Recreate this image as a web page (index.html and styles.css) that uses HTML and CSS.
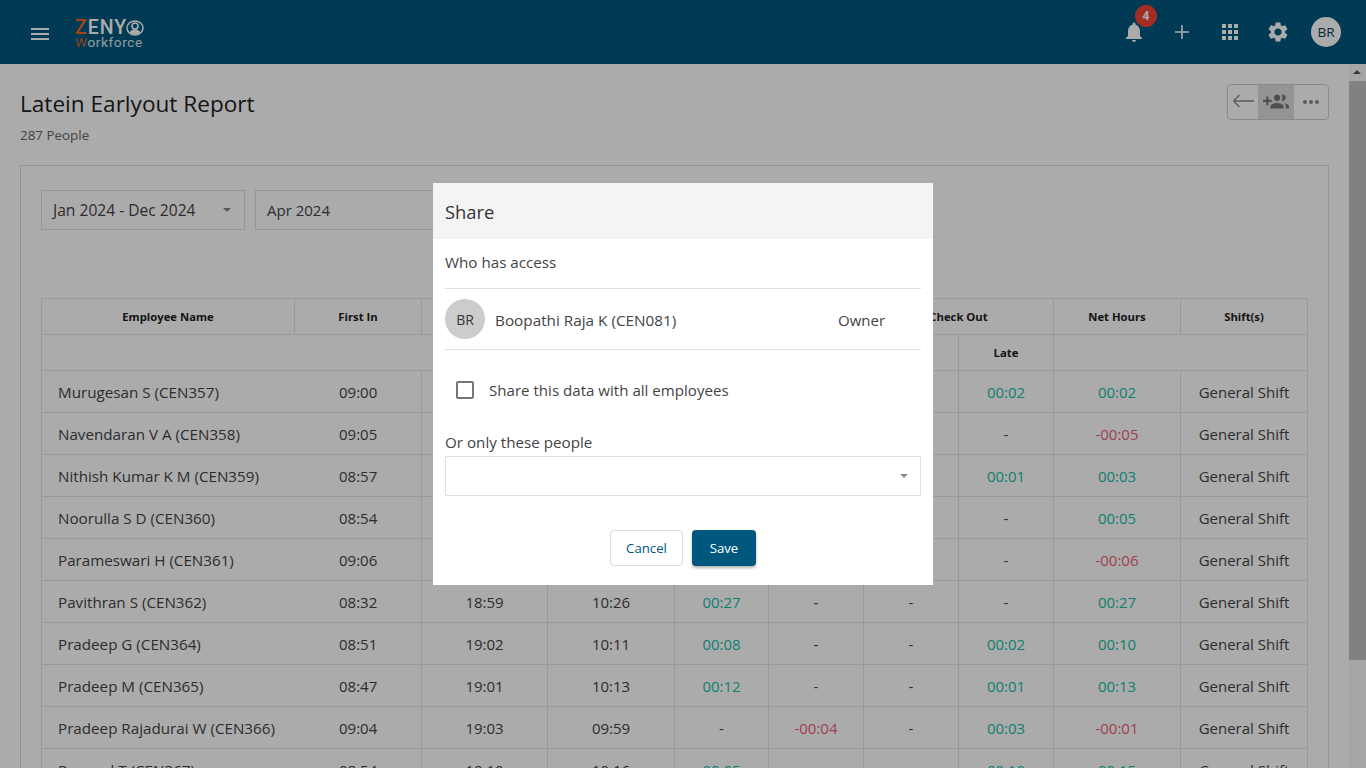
FILE: index.html
```html
<!DOCTYPE html>
<html lang="en">
<head>
<meta charset="utf-8">
<title>Latein Earlyout Report</title>
<link rel="stylesheet" href="styles.css">
</head>
<body>
<div class="app">
  <header class="topbar">
    <svg class="menu-icon" viewBox="0 0 24 24"><path d="M3 18h18v-2H3v2zm0-5h18v-2H3v2zm0-7v2h18V6H3z"/></svg>
    <div class="logo">
      <div class="logo-top"><span class="accent">Z</span>ENY<svg class="logo-mark" viewBox="0 0 18 16"><ellipse cx="9" cy="8" rx="8" ry="7" fill="none" stroke="currentColor" stroke-width="1.5"/><circle cx="9" cy="6" r="3" fill="none" stroke="currentColor" stroke-width="1.6"/><path d="M3.6 12.4c1.2-2.4 3.2-3.2 5.4-3.2s4.2.8 5.4 3.2A7.6 7 0 0 1 3.6 12.4z" fill="currentColor"/></svg></div>
      <div class="logo-sub"><span class="accent">W</span>orkforce</div>
    </div>
    <div class="topbar-actions">
      <div class="action bell">
        <svg viewBox="0 0 24 24"><path d="M12 22c1.1 0 2-.9 2-2h-4c0 1.1.9 2 2 2zm6-6v-5c0-3.07-1.63-5.64-4.5-6.32V4c0-.83-.67-1.5-1.5-1.5s-1.5.67-1.5 1.5v.68C7.64 5.36 6 7.92 6 11v5l-2 2v1h16v-1l-2-2z"/></svg>
        <span class="badge">4</span>
      </div>
      <div class="action"><svg viewBox="0 0 24 24"><path d="M19 12.8h-6.2V19h-1.600v-6.200H5v-1.600h6.200V5h1.600v6.200H19z"/></svg></div>
      <div class="action"><svg viewBox="0 0 24 24"><path d="M4 8h4V4H4v4zm6 12h4v-4h-4v4zm-6 0h4v-4H4v4zm0-6h4v-4H4v4zm6 0h4v-4h-4v4zm6-10v4h4V4h-4zm-6 4h4V4h-4v4zm6 6h4v-4h-4v4zm0 6h4v-4h-4v4z"/></svg></div>
      <div class="action"><svg viewBox="0 0 24 24"><path d="M19.14 12.94c.04-.3.06-.61.06-.94 0-.32-.02-.64-.07-.94l2.03-1.58a.49.49 0 0 0 .12-.61l-1.92-3.32a.488.488 0 0 0-.59-.22l-2.39.96c-.5-.38-1.03-.7-1.62-.94l-.36-2.54a.484.484 0 0 0-.48-.41h-3.84c-.24 0-.43.17-.47.41l-.36 2.54c-.59.24-1.13.57-1.62.94l-2.39-.96c-.22-.08-.47 0-.59.22L2.74 8.87c-.12.21-.08.47.12.61l2.03 1.58c-.05.3-.09.63-.09.94s.02.64.07.94l-2.03 1.58a.49.49 0 0 0-.12.61l1.92 3.32c.12.22.37.29.59.22l2.39-.96c.5.38 1.03.7 1.62.94l.36 2.54c.05.24.24.41.48.41h3.84c.24 0 .44-.17.47-.41l.36-2.54c.59-.24 1.13-.56 1.62-.94l2.39.96c.22.08.47 0 .59-.22l1.92-3.32c.12-.22.07-.47-.12-.61l-2.01-1.58zM12 15.6c-1.98 0-3.6-1.62-3.6-3.6s1.62-3.6 3.6-3.6 3.6 1.62 3.6 3.6-1.62 3.6-3.6 3.6z"/></svg></div>
      <div class="avatar avatar-top">BR</div>
    </div>
  </header>
  <div class="body-row">
    <main class="content">
      <div class="page-head">
        <div>
          <h1 class="page-title">Latein Earlyout Report</h1>
          <p class="page-sub">287 People</p>
        </div>
        <div class="tool-group">
          <div class="tool tool-back"><svg viewBox="0 0 24 24"><path d="M23 11H2.500M2.500 11l6-6M2.500 11l6 6" fill="none" stroke="currentColor" stroke-width="1.3"/></svg></div>
          <div class="tool tool-active"><svg viewBox="0 0 24 24"><path d="M8 10H5V7H3v3H0v2h3v3h2v-3h3v-2zm10 1c1.66 0 2.99-1.34 2.99-3S19.66 5 18 5c-.32 0-.63.05-.91.14.57.81.9 1.79.9 2.86s-.34 2.04-.9 2.86c.28.09.59.14.91.14zm-5 0c1.66 0 3-1.34 3-3s-1.34-3-3-3-3 1.34-3 3 1.34 3 3 3zm6.62 2.16c.83.73 1.38 1.66 1.38 2.84v2h3v-2c0-1.54-2.37-2.49-4.38-2.84zM13 13c-2 0-6 1-6 3v2h12v-2c0-2-4-3-6-3z"/></svg></div>
          <div class="tool"><svg viewBox="0 0 24 24"><path d="M6 10c-1.1 0-2 .9-2 2s.9 2 2 2 2-.9 2-2-.9-2-2-2zm12 0c-1.1 0-2 .9-2 2s.9 2 2 2 2-.9 2-2-.9-2-2-2zm-6 0c-1.1 0-2 .9-2 2s.9 2 2 2 2-.9 2-2-.9-2-2-2z"/></svg></div>
        </div>
      </div>
      <section class="card">
        <div class="filters">
          <div class="select select-year"><span>Jan 2024 - Dec 2024</span><i class="caret"></i></div>
          <div class="select select-month"><span>Apr 2024</span><i class="caret"></i></div>
        </div>
        <table class="report">
          <colgroup>
            <col class="c-name"><col class="c-first"><col class="c-last"><col class="c-work">
            <col class="c-late"><col class="c-sm"><col class="c-sm"><col class="c-sm">
            <col class="c-net"><col class="c-shift">
          </colgroup>
          <thead>
            <tr>
              <th>Employee Name</th><th>First In</th><th>Last Out</th><th>Work Hours</th>
              <th colspan="2">Check In</th><th colspan="2">Check Out</th>
              <th>Net Hours</th><th>Shift(s)</th>
            </tr>
            <tr>
              <th colspan="4"></th><th>Late</th><th>Early</th><th>Early</th><th>Late</th><th colspan="2"></th>
            </tr>
          </thead>
          <tbody>
            <tr><td class="name" colspan="2"><span>Murugesan S (CEN357)</span><span class="in">09:00</span></td><td></td><td></td><td></td><td></td><td></td><td class="good">00:02</td><td class="good">00:02</td><td>General Shift</td></tr>
            <tr><td class="name" colspan="2"><span>Navendaran V A (CEN358)</span><span class="in">09:05</span></td><td></td><td></td><td></td><td></td><td></td><td>-</td><td class="bad">-00:05</td><td>General Shift</td></tr>
            <tr><td class="name" colspan="2"><span>Nithish Kumar K M (CEN359)</span><span class="in">08:57</span></td><td></td><td></td><td></td><td></td><td></td><td class="good">00:01</td><td class="good">00:03</td><td>General Shift</td></tr>
            <tr><td class="name" colspan="2"><span>Noorulla S D (CEN360)</span><span class="in">08:54</span></td><td></td><td></td><td></td><td></td><td></td><td>-</td><td class="good">00:05</td><td>General Shift</td></tr>
            <tr><td class="name" colspan="2"><span>Parameswari H (CEN361)</span><span class="in">09:06</span></td><td></td><td></td><td></td><td></td><td></td><td>-</td><td class="bad">-00:06</td><td>General Shift</td></tr>
            <tr><td class="name" colspan="2"><span>Pavithran S (CEN362)</span><span class="in">08:32</span></td><td>18:59</td><td>10:26</td><td class="good">00:27</td><td>-</td><td>-</td><td>-</td><td class="good">00:27</td><td>General Shift</td></tr>
            <tr><td class="name" colspan="2"><span>Pradeep G (CEN364)</span><span class="in">08:51</span></td><td>19:02</td><td>10:11</td><td class="good">00:08</td><td>-</td><td>-</td><td class="good">00:02</td><td class="good">00:10</td><td>General Shift</td></tr>
            <tr><td class="name" colspan="2"><span>Pradeep M (CEN365)</span><span class="in">08:47</span></td><td>19:01</td><td>10:13</td><td class="good">00:12</td><td>-</td><td>-</td><td class="good">00:01</td><td class="good">00:13</td><td>General Shift</td></tr>
            <tr><td class="name" colspan="2"><span>Pradeep Rajadurai W (CEN366)</span><span class="in">09:04</span></td><td>19:03</td><td>09:59</td><td>-</td><td class="bad">-00:04</td><td>-</td><td class="good">00:03</td><td class="bad">-00:01</td><td>General Shift</td></tr>
            <tr><td class="name" colspan="2"><span>Pramod T (CEN367)</span><span class="in">08:54</span></td><td>19:10</td><td>10:16</td><td class="good">00:05</td><td>-</td><td>-</td><td class="good">00:10</td><td class="good">00:15</td><td>General Shift</td></tr>
          </tbody>
        </table>
      </section>
    </main>
    <div class="scrollbar">
      <div class="scroll-up"></div>
      <div class="scroll-thumb"></div>
    </div>
  </div>
  <div class="overlay">
    <div class="modal">
      <div class="modal-head">Share</div>
      <div class="modal-body">
        <div class="access-title">Who has access</div>
        <div class="owner-row">
          <div class="avatar avatar-owner">BR</div>
          <div class="owner-name">Boopathi Raja K (CEN081)</div>
          <div class="owner-role">Owner</div>
        </div>
        <label class="share-all"><span class="checkbox"></span><span>Share this data with all employees</span></label>
        <div class="people-label">Or only these people</div>
        <div class="people-select"><i class="caret"></i></div>
        <div class="modal-actions">
          <button class="btn btn-cancel">Cancel</button>
          <button class="btn btn-save">Save</button>
        </div>
      </div>
    </div>
  </div>
</div>
</body>
</html>
```
FILE: styles.css
```css
* { box-sizing: border-box; }
html, body { margin: 0; height: 100%; overflow: hidden; }
body { font-family: "Open Sans", "Noto Sans", sans-serif; color: #333; background: #fff; }
.app { position: relative; height: 768px; display: flex; flex-direction: column; overflow: hidden; }

.topbar { height: 64px; flex: none; background: #00577e; color: #fff; display: flex; align-items: center; padding-left: 28px; }
.menu-icon { width: 24px; height: 24px; fill: #fff; margin-top: 3px; }
.logo { margin-left: 23px; margin-top: 3px; color: #fff; line-height: 1; }
.logo-top { display: flex; align-items: center; font: 500 19.5px/16px "Roboto", sans-serif; letter-spacing: 1px; height: 16px; }
.logo-mark { width: 18px; height: 16px; margin-left: -1px; }
.logo-sub { font: 400 13.6px/12px "Roboto", sans-serif; letter-spacing: .6px; opacity: .85; }
.accent { color: #f26522; }
.topbar-actions { margin-left: auto; display: flex; align-items: center; gap: 24px; padding-right: 25px; }
.action { width: 24px; height: 24px; position: relative; }
.action svg { width: 24px; height: 24px; fill: #fff; display: block; }
.badge { position: absolute; left: 13px; top: -15px; width: 22px; height: 22px; border-radius: 50%; background: #f44336; color: #fff; font: 700 12px/22px "Open Sans", sans-serif; text-align: center; }
.avatar { border-radius: 50%; background: #ccc; color: #333; display: flex; align-items: center; justify-content: center; }
.avatar-top { width: 30px; height: 30px; font-size: 13.5px; background: #fff; margin-left: -3px; color: #00405c; }

.body-row { flex: 1; display: flex; min-height: 0; }
.content { flex: 1; min-width: 0; padding: 20px 20px 0; overflow: hidden; }
.page-head { display: flex; justify-content: space-between; height: 81px; }
.page-title { margin: 5px 0 0; font-size: 22.6px; font-weight: 400; line-height: 30px; color: #222; }
.page-sub { margin: 7px 0 0; font-size: 13.4px; line-height: 18px; color: #666; }
.tool-group { display: flex; height: 36px; border: 1px solid #ccc; border-radius: 4px; background: #fff; overflow: hidden; }
.tool { width: 34px; display: flex; align-items: center; justify-content: center; color: #888; }
.tool svg { width: 24px; height: 24px; fill: currentColor; }
.tool-back { width: 30px; }
.tool-back svg { width: 24px; height: 24px; fill: none; }
.tool-active { width: 36px; background: #ddd; color: #777; }
.tool-active svg { width: 26px; height: 26px; }

.card { border: 1px solid #ddd; padding: 24px 20px 0; height: 640px; }
.filters { display: flex; gap: 10px; height: 108px; }
.select { height: 40px; border: 1px solid #e0e0e0; display: flex; align-items: center; justify-content: space-between; padding: 0 13px 0 11px; font-size: 15px; color: #444; }
.select-year { width: 204px; font-size: 15.6px; }
.select-month { width: 204px; }
.caret { width: 0; height: 0; border-left: 4px solid transparent; border-right: 4px solid transparent; border-top: 4px solid #888; }

.report { width: 1266px; table-layout: fixed; border-collapse: collapse; font-size: 15px; color: #444; }
.c-name { width: 253px; }
.c-first { width: 127px; }
.c-last { width: 126px; }
.c-work { width: 127px; }
.c-late { width: 94px; }
.c-sm { width: 95px; }
.c-net { width: 127px; }
.c-shift { width: 127px; }
.report th { height: 36px; border: 1px solid #e4e4e4; font-size: 11.3px; font-weight: 700; color: #222; padding: 0; text-align: center; }
.report td { height: 42px; border: 1px solid #e4e4e4; text-align: center; padding: 0; }
.report td.name { text-align: left; padding-left: 16px; position: relative; font-size: 15.2px; }
.in { position: absolute; left: 297px; top: 50%; transform: translateY(-50%); font-size: 15px; }
.good { color: #17c0a8; }
.bad { color: #ee5f7a; }

.scrollbar { width: 17px; flex: none; background: #f8f8f8; display: flex; flex-direction: column; }
.scroll-up { height: 17px; position: relative; }
.scroll-up::after { content: ""; position: absolute; left: 4px; top: 6px; border-left: 4px solid transparent; border-right: 4px solid transparent; border-bottom: 4px solid #505050; }
.scroll-thumb { height: 579px; background: #c1c1c1; }

.overlay { position: absolute; inset: 0; background: rgba(0,0,0,.33); display: flex; justify-content: center; align-items: flex-start; padding-top: 183px; }
.modal { width: 500px; height: 402px; background: #fff; }
.modal-head { height: 56px; background: #f4f4f4; padding-left: 12px; font-size: 18.4px; line-height: 57px; color: #333; }
.modal-body { padding: 0 12px; color: #444; font-size: 15.2px; }
.access-title { height: 50px; padding-top: 13px; line-height: 20px; border-bottom: 1px solid #e0e0e0; }
.owner-row { height: 61px; display: flex; align-items: center; border-bottom: 1px solid #e0e0e0; }
.avatar-owner { width: 40px; height: 40px; font-size: 14px; flex: none; }
.owner-name { margin-left: 10px; flex: 1; padding-top: 2px; font-size: 15.3px; }
.owner-role { width: 83px; padding-top: 2px; font-size: 15px; }
.share-all { display: flex; align-items: center; height: 81px; padding-left: 11px; padding-bottom: 1px; gap: 15px; font-size: 15.1px; }
.checkbox { width: 18px; height: 18px; border: 2px solid #757575; border-radius: 2px; }
.people-label { height: 25px; line-height: 22px; }
.people-select { height: 40px; border: 1px solid #e0e0e0; display: flex; align-items: center; justify-content: flex-end; padding-right: 12px; }
.modal-actions { display: flex; justify-content: center; gap: 9px; margin-top: 34px; }
.btn { height: 36px; border-radius: 4px; font: 400 13.2px "Open Sans", sans-serif; padding: 0; }
.btn-cancel { width: 73px; background: #fff; border: 1px solid #ddd; color: #00577e; }
.btn-save { width: 64px; background: #00577e; border: 0; color: #fff; box-shadow: 0 2px 3px rgba(0,0,0,.3); font-weight: 500; }
```
